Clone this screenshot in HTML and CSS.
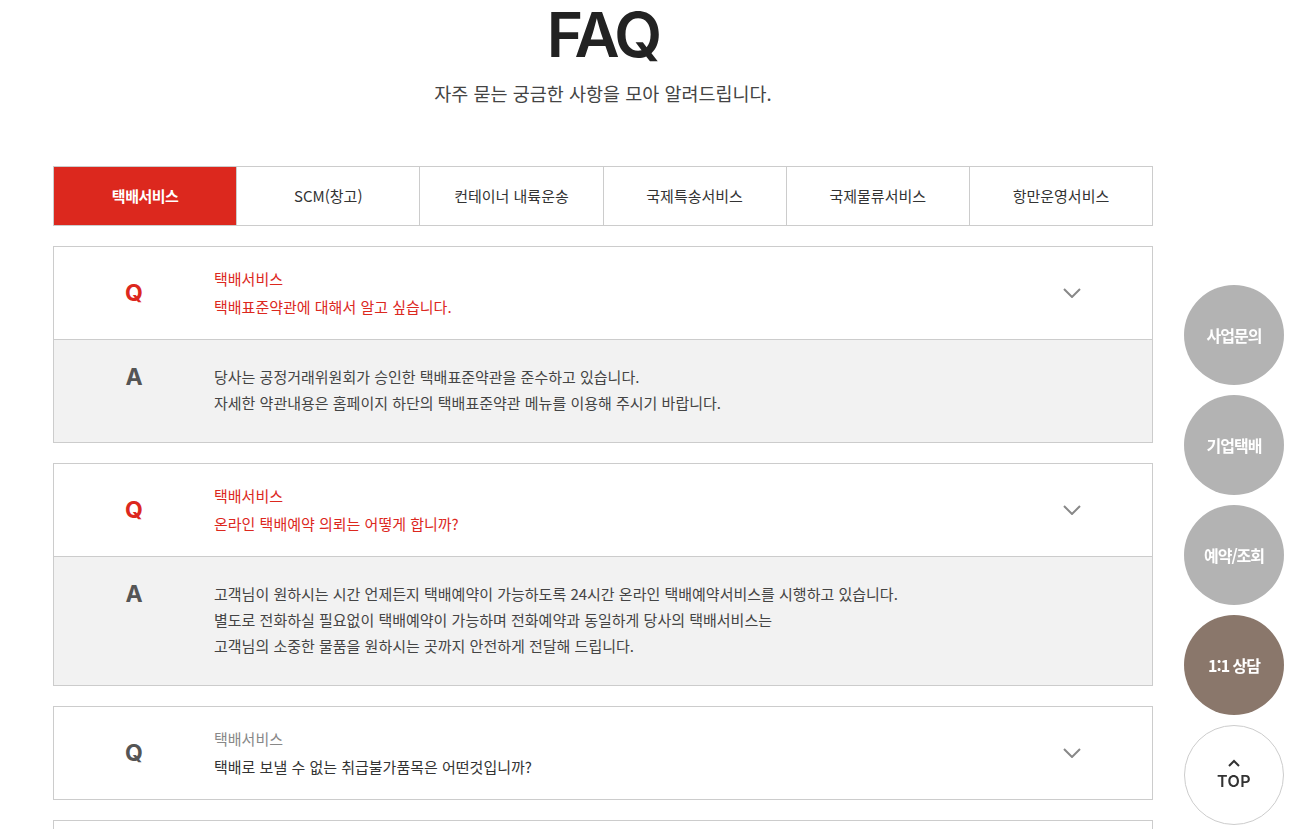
FILE: index.html
```html
<!DOCTYPE html>
<html lang="ko">
<head>
    <meta charset="UTF-8">
    <meta name="viewport" content="width=device-width, initial-scale=1.0">
    <title>FAQ</title>
    <link rel="stylesheet" href="styles.css">
</head>
<body>
    <div class="wrap">
        <div class="tit-area">
            <h2 class="tit">FAQ</h2>
            <p class="sub-tit">자주 묻는 궁금한 사항을 모아 알려드립니다.</p>
        </div>

        <ul class="tab-list">
            <li class="on">택배서비스</li>
            <li>SCM(창고)</li>
            <li>컨테이너 내륙운송</li>
            <li>국제특송서비스</li>
            <li>국제물류서비스</li>
            <li>항만운영서비스</li>
        </ul>

        <ul class="faq-list">
            <li class="faq-item on">
                <div class="faq-q">
                    <span class="mark">Q</span>
                    <div class="q-txt">
                        <p class="cate">택배서비스</p>
                        <p class="subj">택배표준약관에 대해서 알고 싶습니다.</p>
                    </div>
                    <span class="arrow"><svg width="18" height="10" viewBox="0 0 18 10"><path d="M1 1l8 8 8-8" fill="none" stroke="#888" stroke-width="2"/></svg></span>
                </div>
                <div class="faq-a">
                    <span class="mark">A</span>
                    <div class="a-txt">
                        당사는 공정거래위원회가 승인한 택배표준약관을 준수하고 있습니다.<br>
                        자세한 약관내용은 홈페이지 하단의 택배표준약관 메뉴를 이용해 주시기 바랍니다.
                    </div>
                </div>
            </li>
            <li class="faq-item on">
                <div class="faq-q">
                    <span class="mark">Q</span>
                    <div class="q-txt">
                        <p class="cate">택배서비스</p>
                        <p class="subj">온라인 택배예약 의뢰는 어떻게 합니까?</p>
                    </div>
                    <span class="arrow"><svg width="18" height="10" viewBox="0 0 18 10"><path d="M1 1l8 8 8-8" fill="none" stroke="#888" stroke-width="2"/></svg></span>
                </div>
                <div class="faq-a">
                    <span class="mark">A</span>
                    <div class="a-txt">
                        고객님이 원하시는 시간 언제든지 택배예약이 가능하도록 24시간 온라인 택배예약서비스를 시행하고 있습니다.<br>
                        별도로 전화하실 필요없이 택배예약이 가능하며 전화예약과 동일하게 당사의 택배서비스는<br>
                        고객님의 소중한 물품을 원하시는 곳까지 안전하게 전달해 드립니다.
                    </div>
                </div>
            </li>
            <li class="faq-item">
                <div class="faq-q">
                    <span class="mark">Q</span>
                    <div class="q-txt">
                        <p class="cate">택배서비스</p>
                        <p class="subj">택배로 보낼 수 없는 취급불가품목은 어떤것입니까?</p>
                    </div>
                    <span class="arrow"><svg width="18" height="10" viewBox="0 0 18 10"><path d="M1 1l8 8 8-8" fill="none" stroke="#888" stroke-width="2"/></svg></span>
                </div>
            </li>
            <li class="faq-item">
                <div class="faq-q">
                    <span class="mark">Q</span>
                    <div class="q-txt">
                        <p class="cate">택배서비스</p>
                        <p class="subj">택배 포장은 어떻게 해야 합니까?</p>
                    </div>
                    <span class="arrow"><svg width="18" height="10" viewBox="0 0 18 10"><path d="M1 1l8 8 8-8" fill="none" stroke="#888" stroke-width="2"/></svg></span>
                </div>
            </li>
        </ul>
    </div>

    <!-- 퀵메뉴 -->
    <div class="quick">
        <a class="qbtn">사업문의</a>
        <a class="qbtn">기업택배</a>
        <a class="qbtn">예약/조회</a>
        <a class="qbtn talk">1:1 상담</a>
        <a class="qbtn top">
            <svg width="12" height="8" viewBox="0 0 12 8"><path d="M1 7l5-5 5 5" fill="none" stroke="#333" stroke-width="2"/></svg>
            <span>TOP</span>
        </a>
    </div>
</body>
</html>
```

FILE: styles.css
```css
body {
    margin: 0;
    font-family: 'Noto Sans CJK KR', 'Noto Sans', sans-serif;
    color: #333;
    background-color: #fff;
}

ul, p {
    margin: 0;
    padding: 0;
    list-style: none;
}

.wrap {
    width: 1100px;
    padding-left: 53px;
}

.tit-area {
    text-align: center;
}

.tit {
    margin: 0;
    font-family: 'Inter', sans-serif;
    font-size: 62px;
    line-height: 70px;
    font-weight: 600;
    letter-spacing: -3px;
    color: #222;
}

.sub-tit {
    margin-top: 10px;
    font-size: 18.5px;
    line-height: 26px;
    color: #444;
}

.tab-list {
    display: flex;
    margin-top: 60px;
    border: 1px solid #ccc;
}

.tab-list li {
    flex: 1;
    height: 58px;
    line-height: 58px;
    text-align: center;
    font-size: 15px;
    color: #333;
    border-left: 1px solid #ccc;
}

.tab-list li:first-child {
    border-left: 0;
}

.tab-list li.on {
    background-color: #dc281e;
    color: #fff;
    font-weight: 700;
    letter-spacing: -0.5px;
}

.faq-list {
    margin-top: 20px;
}

.faq-item {
    border: 1px solid #ccc;
    margin-bottom: 20px;
}

.faq-q, .faq-a {
    display: grid;
    grid-template-columns: 160px 1fr 160px;
}

.faq-q {
    align-items: center;
    padding: 18px 0;
    line-height: 28px;
    font-size: 15px;
}

.mark {
    text-align: center;
    font-family: 'Inter', sans-serif;
    font-size: 23px;
    font-weight: 700;
    color: #555;
}

.cate {
    color: #888;
}

.subj {
    color: #333;
}

.faq-item.on .faq-q .mark,
.faq-item.on .cate,
.faq-item.on .subj {
    color: #dc281e;
}

.arrow {
    text-align: center;
    line-height: 0;
}

.faq-a {
    align-items: start;
    padding: 24px 0 26px;
    border-top: 1px solid #ccc;
    background-color: #f2f2f2;
    font-size: 15px;
    line-height: 26px;
    color: #444;
}

.faq-a .mark {
    line-height: 26px;
}

/* 퀵메뉴 */
.quick {
    position: fixed;
    top: 285px;
    right: 10px;
    display: flex;
    flex-direction: column;
    gap: 10px;
}

.qbtn {
    display: flex;
    flex-direction: column;
    align-items: center;
    justify-content: center;
    width: 100px;
    height: 100px;
    border-radius: 50%;
    background-color: #b3b3b3;
    color: #fff;
    font-size: 16px;
    font-weight: 700;
    letter-spacing: -1px;
    box-sizing: border-box;
}

.qbtn.talk {
    background-color: #8a776b;
}

.qbtn.top {
    background-color: #fff;
    border: 1px solid #ccc;
    color: #333;
    font-family: 'Inter', sans-serif;
    font-weight: 600;
    letter-spacing: 0.5px;
    gap: 4px;
}
```
